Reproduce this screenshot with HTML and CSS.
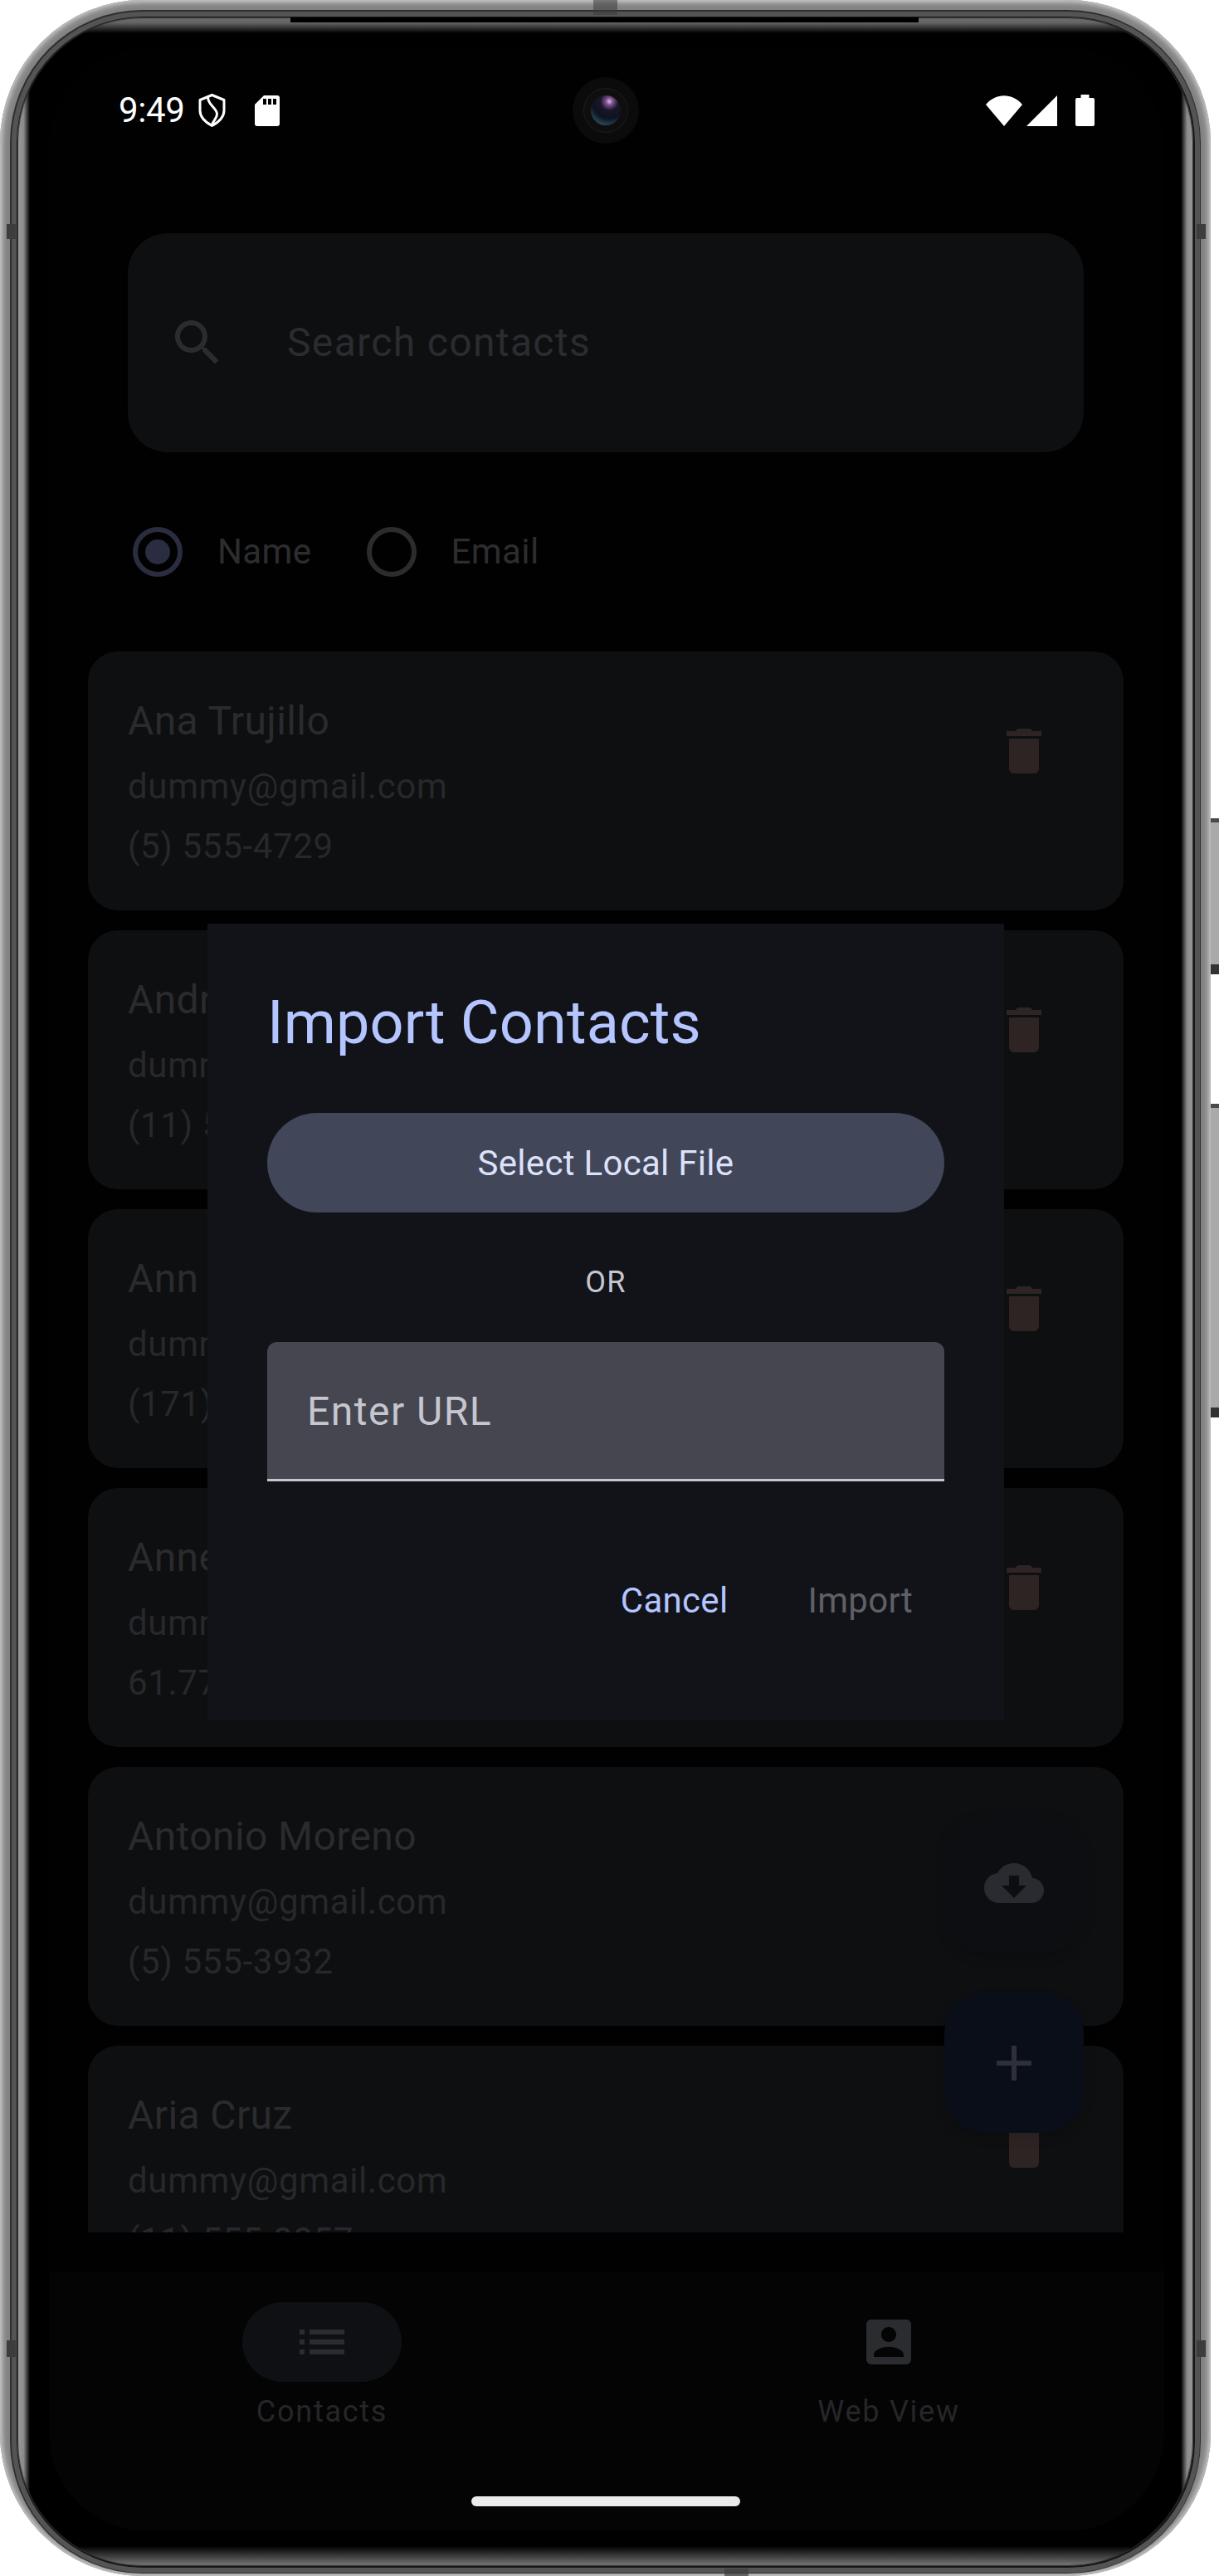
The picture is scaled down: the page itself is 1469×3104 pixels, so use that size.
FILE: index.html
```html
<!DOCTYPE html>
<html lang="en">
<head>
<meta charset="utf-8">
<title>Import Contacts</title>
<link rel="stylesheet" href="styles.css">
</head>
<body>
<div class="device">
  <div class="shell">
    <div class="mark mark-top"></div>
    <div class="mark mark-bottom"></div>
    <div class="mark mark-lt"></div>
    <div class="mark mark-rt"></div>
    <div class="mark mark-lb"></div>
    <div class="mark mark-rb"></div>
    <div class="ring-line">
      <div class="ring-mid">
        <div class="ring-dark">
          <div class="bezel">
            <div class="bezel-notch"></div>
            <div class="screen">
              <div class="status">
                <div class="status-left">
                  <span class="time">9:49</span>
                  <svg class="i-shield" viewBox="0 0 33 40"><path d="M16.5 1.5 L31 7.5 V20 C31 29 24 34.5 16.5 38.5 C9 34.5 2 29 2 20 V7.5 Z M11.5 4 C11.5 14 22.5 17 22.5 24.5 C22.5 30 18 32 16.5 37.5"/></svg>
                  <svg class="i-sd" viewBox="0 0 30 37"><path class="white" d="M11 0 H27 a3 3 0 0 1 3 3 V34 a3 3 0 0 1-3 3 H3 a3 3 0 0 1-3-3 V11 Z"/><path class="hole" d="M10 4h4v7h-4zM16 4h4v7h-4zM22 4h4v7h-4z"/></svg>
                </div>
                <div class="status-right">
                  <svg class="i-wifi" viewBox="0 0 44 37"><path d="M0 11 C12 -3.5 32 -3.5 44 11 L22 37 Z"/></svg>
                  <svg class="i-signal" viewBox="0 0 37 37"><path d="M0 37 L37 0 V37 Z"/></svg>
                  <svg class="i-battery" viewBox="0 0 23 38"><path d="M6.5 0 h10 v4 h4.5 a2 2 0 0 1 2 2 V36 a2 2 0 0 1-2 2 H2 a2 2 0 0 1-2-2 V6 a2 2 0 0 1 2-2 h4.500 Z"/></svg>
                </div>
              </div>

              <div class="camera"><div class="camera-ring"><div class="camera-lens"></div></div></div>

              <div class="search">
                <svg class="i-search" viewBox="0 0 24 24"><path d="M15.5 14h-.79l-.28-.27C15.41 12.59 16 11.11 16 9.5 16 5.91 13.09 3 9.5 3S3 5.91 3 9.5 5.91 16 9.5 16c1.61 0 3.09-.59 4.23-1.57l.27.28v.79l5 4.99L20.49 19l-4.99-5zm-6 0C7.01 14 5 11.99 5 9.5S7.01 5 9.500 5 14 7.010 14 9.500 11.990 14 9.500 14z"/></svg>
                <span class="search-text">Search contacts</span>
              </div>

              <div class="radios">
                <div class="radio-opt">
                  <svg class="radio on" viewBox="0 0 60 60"><circle class="radio-ring" cx="30" cy="30" r="27"/><circle class="radio-dot" cx="30" cy="30" r="15"/></svg>
                  <span class="radio-label">Name</span>
                </div>
                <div class="radio-opt">
                  <svg class="radio" viewBox="0 0 60 60"><circle class="radio-ring" cx="30" cy="30" r="27"/></svg>
                  <span class="radio-label">Email</span>
                </div>
              </div>

              <div class="list">
                <div class="card">
                  <div class="card-text"><div class="c-name">Ana Trujillo</div><div class="c-mail">dummy@gmail.com</div><div class="c-phone">(5) 555-4729</div></div>
                  <svg class="i-trash" viewBox="0 0 24 24"><path d="M6 19c0 1.100.9 2 2 2h8c1.100 0 2-.9 2-2V7H6v12zM19 4h-3.500l-1-1h-5l-1 1H5v2h14V4z"/></svg>
                </div>
                <div class="card">
                  <div class="card-text"><div class="c-name">Andre Fonseca</div><div class="c-mail">dummy@gmail.com</div><div class="c-phone">(11) 555-9482</div></div>
                  <svg class="i-trash" viewBox="0 0 24 24"><path d="M6 19c0 1.100.9 2 2 2h8c1.100 0 2-.9 2-2V7H6v12zM19 4h-3.500l-1-1h-5l-1 1H5v2h14V4z"/></svg>
                </div>
                <div class="card">
                  <div class="card-text"><div class="c-name">Ann Devon</div><div class="c-mail">dummy@gmail.com</div><div class="c-phone">(171) 555-0297</div></div>
                  <svg class="i-trash" viewBox="0 0 24 24"><path d="M6 19c0 1.100.9 2 2 2h8c1.100 0 2-.9 2-2V7H6v12zM19 4h-3.500l-1-1h-5l-1 1H5v2h14V4z"/></svg>
                </div>
                <div class="card">
                  <div class="card-text"><div class="c-name">Annette Roulet</div><div class="c-mail">dummy@gmail.com</div><div class="c-phone">61.77.61.10</div></div>
                  <svg class="i-trash" viewBox="0 0 24 24"><path d="M6 19c0 1.100.9 2 2 2h8c1.100 0 2-.9 2-2V7H6v12zM19 4h-3.500l-1-1h-5l-1 1H5v2h14V4z"/></svg>
                </div>
                <div class="card">
                  <div class="card-text"><div class="c-name">Antonio Moreno</div><div class="c-mail">dummy@gmail.com</div><div class="c-phone">(5) 555-3932</div></div>
                  <svg class="i-trash" viewBox="0 0 24 24"><path d="M6 19c0 1.100.9 2 2 2h8c1.100 0 2-.9 2-2V7H6v12zM19 4h-3.500l-1-1h-5l-1 1H5v2h14V4z"/></svg>
                </div>
                <div class="card">
                  <div class="card-text"><div class="c-name">Aria Cruz</div><div class="c-mail">dummy@gmail.com</div><div class="c-phone">(11) 555-8857</div></div>
                  <svg class="i-trash" viewBox="0 0 24 24"><path d="M6 19c0 1.100.9 2 2 2h8c1.100 0 2-.9 2-2V7H6v12zM19 4h-3.500l-1-1h-5l-1 1H5v2h14V4z"/></svg>
                </div>
              </div>

              <div class="nav">
                <div class="nav-row">
                  <div class="nav-item">
                    <div class="nav-pill active">
                      <svg class="i-nav" viewBox="0 0 24 24"><path d="M3 13h2v-2H3v2zm0 4h2v-2H3v2zm0-8h2V7H3v2zm4 4h14v-2H7v2zm0 4h14v-2H7v2zM7 7v2h14V7H7z"/></svg>
                    </div>
                    <span class="nav-label">Contacts</span>
                  </div>
                  <div class="nav-item">
                    <div class="nav-pill">
                      <svg class="i-nav" viewBox="0 0 24 24"><path d="M3 5v14c0 1.100.89 2 2 2h14c1.100 0 2-.9 2-2V5c0-1.100-.9-2-2-2H5c-1.110 0-2 .9-2 2zm12 4c0 1.660-1.340 3-3 3s-3-1.340-3-3 1.340-3 3-3 3 1.340 3 3zm-9 8c0-2 4-3.100 6-3.100s6 1.100 6 3.100v1H6v-1z"/></svg>
                    </div>
                    <span class="nav-label">Web View</span>
                  </div>
                </div>
                <div class="home-bar"></div>
              </div>

              <div class="fabs">
                <div class="fab fab-cloud">
                  <svg class="i-cloud" viewBox="0 0 24 24"><path d="M19.350 10.040C18.670 6.590 15.640 4 12 4 9.110 4 6.600 5.640 5.350 8.040 2.340 8.360 0 10.910 0 14c0 3.310 2.690 6 6 6h13c2.760 0 5-2.240 5-5 0-2.640-2.050-4.780-4.650-4.960zM17 13l-5 5-5-5h3V9h4v4h3z"/></svg>
                </div>
                <div class="fab fab-add">
                  <svg class="i-add" viewBox="0 0 24 24"><path d="M19 13h-6v6h-2v-6H5v-2h6V5h2v6h6v2z"/></svg>
                </div>
              </div>

              <div class="dialog">
                <div class="d-title">Import Contacts</div>
                <div class="d-button">Select Local File</div>
                <div class="d-or">OR</div>
                <div class="d-input"><span class="d-input-label">Enter URL</span></div>
                <div class="d-actions">
                  <span class="d-action d-cancel">Cancel</span>
                  <span class="d-action d-import">Import</span>
                </div>
              </div>
            </div>
          </div>
        </div>
      </div>
    </div>
  </div>
  <div class="keys">
    <div class="key key-power"></div>
    <div class="key key-volume"></div>
  </div>
</div>
</body>
</html>
```
FILE: styles.css
```css
* { box-sizing: border-box; }
html, body { margin: 0; padding: 0; background: #fff; }
body { font-family: Roboto, "Liberation Sans", sans-serif; }

.device { display: flex; width: 1469px; height: 3104px; }

/* phone body: nested rounded rings */
.shell {
  position: relative;
  flex: none;
  width: 1459px;
  height: 3104px;
  padding: 12px 12px 3px 12px;
  border-radius: 172px;
  background: #808080;
  box-shadow: inset 0 0 5px 2px #c9c9c9, inset 0 0 10px 4px #a0a0a0;
}
.ring-line { height: 100%; padding: 1.5px; border-radius: 160px; background: #2e2e2e; }
.ring-mid { height: 100%; padding: 6px; border-radius: 158px; background: #545454; }
.ring-dark { height: 100%; padding: 1.5px; border-radius: 152px; background: #161616; }
.bezel {
  position: relative;
  height: 100%;
  padding: 37px 35px 42px 38px;
  border-radius: 150px;
  background-color: #000;
  background-image:
    linear-gradient(90deg, #9c9c9c, #8a8a8a 50%, #000),
    linear-gradient(270deg, #9c9c9c, #8a8a8a 50%, #000),
    linear-gradient(180deg, #6a6a6a, #666 32%, #000),
    linear-gradient(0deg, #7a7a7a, #555 30%, #000);
  background-size: 15px calc(100% - 76px), 15px calc(100% - 76px), calc(100% - 152px) 19px, calc(100% - 152px) 24px;
  background-position: left center, right center, center top, center bottom;
  background-repeat: no-repeat;
  box-shadow: inset 0 0 1px 1px #333;
}
.bezel-notch {
  position: absolute;
  left: 329px;
  top: 0;
  width: 757px;
  height: 6px;
  background: #000;
}

.mark { position: absolute; background: #3d3d3d; }
.mark-top { left: 715px; top: 0; width: 29px; height: 18px; opacity: .55; }
.mark-bottom { left: 873px; bottom: 0; width: 29px; height: 9px; opacity: .7; }
.mark-lt { left: 8px; top: 270px; width: 11px; height: 18px; }
.mark-rt { right: 6px; top: 270px; width: 11px; height: 18px; }
.mark-lb { left: 8px; top: 2820px; width: 11px; height: 20px; }
.mark-rb { right: 6px; top: 2820px; width: 11px; height: 20px; }

/* side keys */
.keys { flex: none; width: 10px; display: flex; flex-direction: column; }
.key {
  width: 10px;
  border-top: 5px solid #4a4a4a;
  border-bottom: 12px solid #333;
  background: #a9a9a9;
}
.key-power { height: 188px; margin-top: 986px; }
.key-volume { height: 378px; margin-top: 156px; }

/* screen */
.screen {
  position: relative;
  display: flex;
  flex-direction: column;
  width: 1344px;
  height: 2992px;
  border-radius: 118px;
  background: #010101;
  overflow: hidden;
}

.status {
  flex: none;
  height: 150px;
  padding: 0 84px;
  display: flex;
  justify-content: space-between;
  align-items: center;
}
.status-left, .status-right { display: flex; align-items: center; }
.time { font-size: 42px; line-height: 48px; color: #fff; letter-spacing: -.4px; }
.i-shield { width: 33px; height: 40px; margin-left: 17px; }
.i-shield path { fill: none; stroke: #fff; stroke-width: 3; stroke-linejoin: round; }
.i-sd { width: 30px; height: 37px; margin-left: 35px; }
.white { fill: #fff; }
.hole { fill: #000; }
.i-wifi { width: 44px; height: 37px; fill: #fff; }
.i-signal { width: 37px; height: 37px; margin-left: 5px; fill: #fff; }
.i-battery { width: 23px; height: 38px; margin-left: 22px; fill: #fff; }

.camera {
  position: absolute;
  left: 631px;
  top: 35px;
  width: 80px;
  height: 80px;
  padding: 13px;
  border-radius: 50%;
  background: #0b0b0b;
}
.camera-ring {
  width: 54px;
  height: 54px;
  padding: 9px;
  border-radius: 50%;
  background: #0e0e0e;
  box-shadow: inset 0 0 0 1px #1d1d1d;
}
.camera-lens {
  width: 36px;
  height: 36px;
  border-radius: 50%;
  background: radial-gradient(circle at 62% 20%, #d9b8e2 0, #7a5090 12%, #1a1528 30%, #0c1420 56%, #2c4a5c 82%, #262626 100%);
}

.search {
  flex: none;
  display: flex;
  align-items: center;
  height: 264px;
  margin: 73px 97px 0 95px;
  padding-left: 48px;
  gap: 72px;
  border-radius: 48px;
  background: #0e0f11;
}
.i-search { flex: none; width: 72px; height: 72px; fill: #2b2c2f; }
.search-text { font-size: 48px; line-height: 60px; letter-spacing: 1.35px; color: #2b2c2f; }

.radios {
  flex: none;
  display: flex;
  align-items: center;
  height: 120px;
  margin-top: 60px;
  padding-left: 101px;
  gap: 66px;
}
.radio-opt { display: flex; align-items: center; gap: 42px; }
.radio { flex: none; width: 60px; height: 60px; }
.radio-ring { fill: none; stroke: #2c2c2e; stroke-width: 6; }
.radio.on .radio-ring { stroke: #2a2d3f; }
.radio-dot { fill: #2a2d3f; }
.radio-label { font-size: 42px; line-height: 60px; letter-spacing: .4px; color: #2c2d2f; }

.list {
  flex: none;
  display: flex;
  flex-direction: column;
  gap: 24px;
  height: 1905px;
  margin: 60px 49px 0 47px;
  overflow: hidden;
}
.card {
  flex: none;
  display: flex;
  justify-content: space-between;
  align-items: flex-start;
  height: 312px;
  padding: 48px 85px 0 48px;
  border-radius: 36px;
  background: #0e0f11;
}
.c-name { font-size: 48px; line-height: 72px; letter-spacing: .4px; color: #2a2b2e; }
.c-mail { margin-top: 7px; font-size: 42px; line-height: 72px; letter-spacing: .65px; color: #27282b; }
.c-phone { font-size: 42px; line-height: 72px; letter-spacing: .65px; color: #27282b; }
.i-trash { flex: none; width: 72px; height: 72px; margin-top: 36px; margin-right: -1px; fill: #2f2424; }

.nav {
  flex: none;
  height: 313px;
  margin-top: 47px;
  padding-top: 37px;
  background: #040404;
}
.nav-row { display: flex; gap: 491px; padding-left: 233px; }
.nav-item { display: flex; flex-direction: column; align-items: center; width: 192px; }
.nav-pill {
  display: flex;
  align-items: center;
  justify-content: center;
  width: 192px;
  height: 96px;
  border-radius: 48px;
}
.nav-pill.active { background: #0e1014; }
.i-nav { width: 72px; height: 72px; fill: #2b2c30; }
.nav-label {
  margin-top: 12px;
  font-size: 36px;
  line-height: 48px;
  font-weight: 400;
  letter-spacing: 1.75px;
  white-space: nowrap;
  color: #252629;
}
.home-bar {
  width: 324px;
  height: 12px;
  margin: 78px 0 0 509px;
  border-radius: 6px;
  background: #ebebeb;
}

/* floating buttons */
.fabs {
  position: absolute;
  left: 1079px;
  top: 2127px;
  display: flex;
  flex-direction: column;
  gap: 49px;
}
.fab {
  display: flex;
  align-items: center;
  justify-content: center;
  width: 168px;
  height: 168px;
  border-radius: 48px;
  box-shadow: 0 6px 14px rgba(0, 0, 0, .14);
}
.fab-cloud { background: #0d0e11; }
.fab-add { background: #0a0e18; }
.i-cloud { width: 72px; height: 72px; fill: #2a2b30; }
.i-add { width: 72px; height: 72px; fill: #2e3037; }

/* dialog */
.dialog {
  position: absolute;
  left: 191px;
  top: 1055px;
  width: 960px;
  height: 960px;
  padding: 72px 72px 0;
  background: #121319;
}
.d-title { font-size: 72px; line-height: 96px; letter-spacing: .15px; color: #b4c5ff; }
.d-button {
  display: flex;
  align-items: center;
  justify-content: center;
  height: 120px;
  margin-top: 60px;
  border-radius: 60px;
  background: #414658;
  font-size: 42px;
  letter-spacing: .3px;
  color: #dce1f9;
}
.d-or {
  margin-top: 60px;
  text-align: center;
  font-size: 36px;
  line-height: 48px;
  letter-spacing: 1.2px;
  color: #c6c6d0;
}
.d-input {
  display: flex;
  align-items: center;
  height: 168px;
  margin-top: 48px;
  padding-left: 48px;
  border-radius: 12px 12px 0 0;
  border-bottom: 3px solid #c6c6d0;
  background: #45464f;
}
.d-input-label { position: relative; top: 1px; font-size: 48px; line-height: 60px; letter-spacing: 1.5px; color: #c6c6d0; }
.d-actions {
  display: flex;
  justify-content: flex-end;
  gap: 96px;
  margin-top: 114px;
  padding-right: 38px;
}
.d-action { font-size: 42px; line-height: 60px; letter-spacing: .3px; }
.d-cancel { color: #b4c5ff; }
.d-import { color: #5f6066; }
```
